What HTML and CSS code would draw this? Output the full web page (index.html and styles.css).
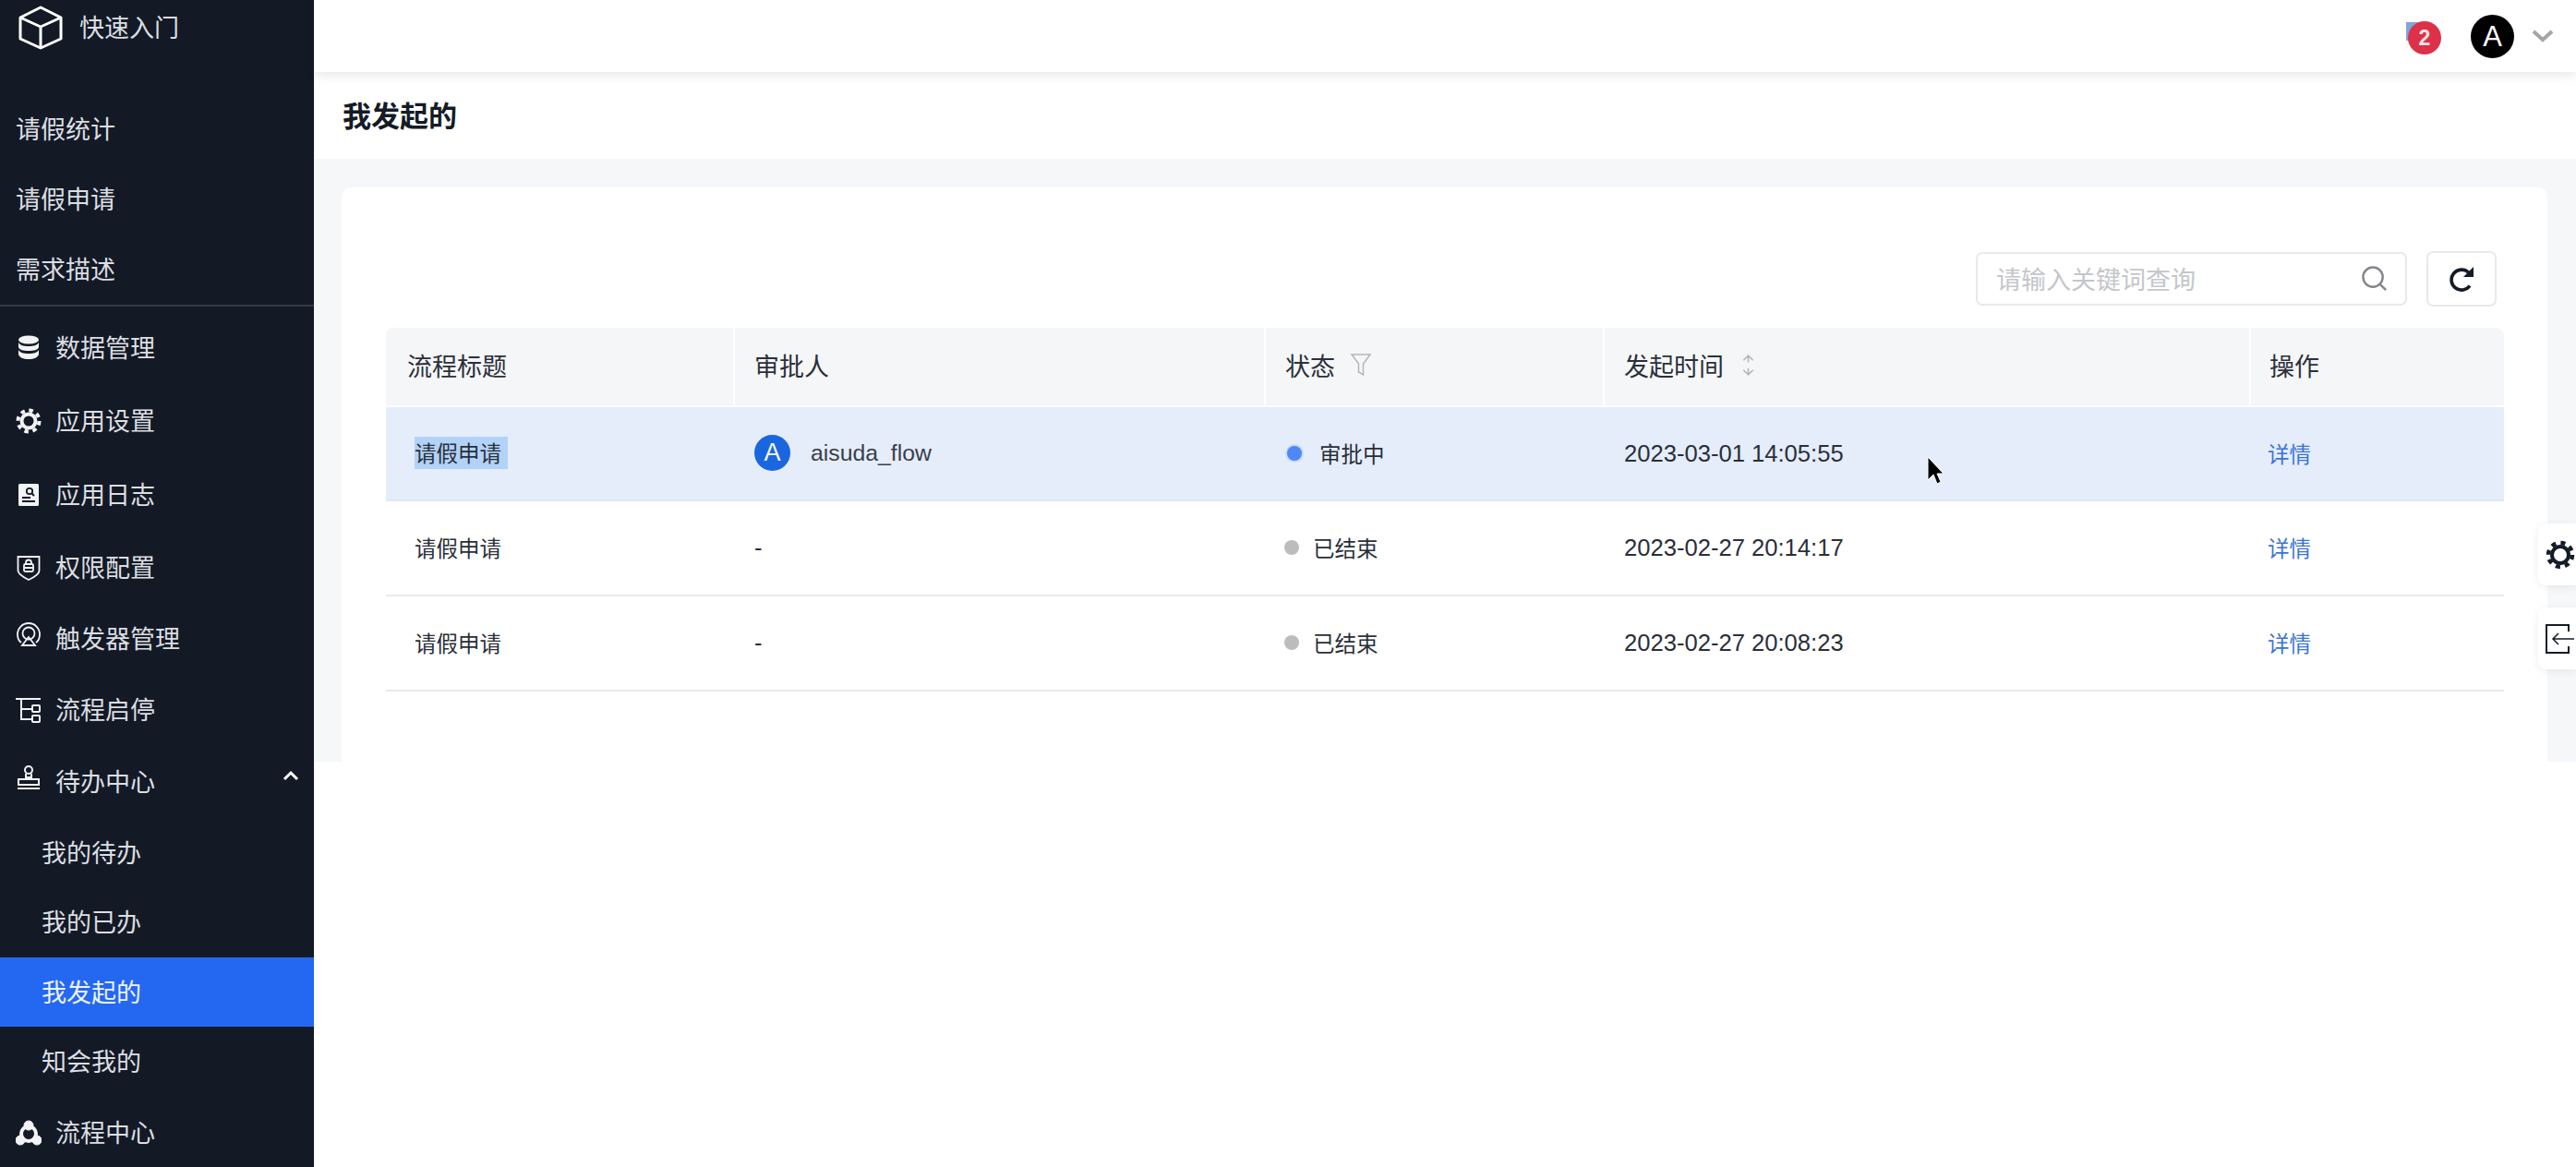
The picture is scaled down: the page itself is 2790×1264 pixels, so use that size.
FILE: index.html
```html
<!DOCTYPE html>
<html lang="zh-CN">
<head>
  <meta charset="UTF-8" />
  <title>我发起的</title>
  <link rel="stylesheet" href="styles.css">
</head>
<body>
  <aside class="sidebar">
    <div class="logo">
      <svg class="logo-icon" viewBox="0 0 48 48" fill="none" stroke="currentColor" stroke-width="3" stroke-linejoin="round">
        <path d="M24 2 46 13V36L24 46 2 36V13Z" />
        <path d="M2 13 24 23 46 13M24 23V46" />
      </svg>
      <span>快速入门</span>
    </div>
    <a class="plain">请假统计</a>
    <a class="plain">请假申请</a>
    <a class="plain">需求描述</a>
    <div class="divider"></div>

    <a class="item tall">
      <svg class="icon" viewBox="0 0 28 28" fill="currentColor">
        <ellipse cx="14" cy="5" rx="11" ry="4.5" />
        <path d="M3 8c2 3 5 4 11 4s9-1 11-4v5c-1 3-5 4-11 4S4 16 3 13Z" />
        <path d="M3 16c2 3 5 4 11 4s9-1 11-4v5c-1 3-5 5-11 5S4 24 3 21Z" />
      </svg>
      <span>数据管理</span>
    </a>
    <a class="item tall">
      <svg class="icon" viewBox="0 0 28 28" fill="none" stroke="currentColor">
        <circle cx="14" cy="14" r="7.5" stroke-width="4" />
        <circle cx="14" cy="14" r="11.5" stroke-width="4" stroke-dasharray="4.5 4.53" />
      </svg>
      <span>应用设置</span>
    </a>
    <a class="item tall">
      <svg class="icon" viewBox="0 0 28 28">
        <rect x="3" y="2" width="22" height="24" rx="1.5" fill="currentColor" />
        <circle cx="15" cy="10" r="3.2" fill="none" stroke="#131a26" stroke-width="1.8" />
        <path d="M17.5 12.5 20 15M7 17h9M7 21h14" fill="none" stroke="#131a26" stroke-width="2" />
      </svg>
      <span>应用日志</span>
    </a>
    <a class="item">
      <svg class="icon" viewBox="0 0 28 28" fill="none" stroke="currentColor" stroke-width="1.8">
        <path d="M2.5 2h23v15c0 4-5 7-11.500 10C8 24 2.500 21 2.500 17Z" />
        <rect x="9" y="10" width="10" height="8" rx="1.5" />
        <path d="M11 10V8.500a3 3 0 0 1 6 0V10M9 14h10" />
      </svg>
      <span>权限配置</span>
    </a>
    <a class="item short">
      <svg class="icon up" viewBox="0 0 28 28" fill="none" stroke="currentColor" stroke-width="1.800">
        <path d="M6 23C3 21 2 17 2 14a12 12 0 0 1 24 0c0 3-1 7-4 9" />
        <circle cx="14" cy="13" r="6.500" />
        <path d="M14 17 21 26H7Z" />
      </svg>
      <span>触发器管理</span>
    </a>
    <a class="item">
      <svg class="icon wide" viewBox="0 0 28 28" fill="none" stroke="currentColor" stroke-width="2">
        <path d="M0 2h27M6 2v22h11M6 13h11" />
        <rect x="18" y="9" width="8" height="7" rx="1" />
        <rect x="18" y="20" width="8" height="7" rx="1" />
      </svg>
      <span>流程启停</span>
    </a>
    <a class="item">
      <svg class="icon up" viewBox="0 0 28 28" fill="none" stroke="currentColor" stroke-width="2">
        <circle cx="14" cy="6" r="4" />
        <path d="M11 10v4h6v-4" />
        <path d="M3 16h22v6H3ZM2 26h24" />
      </svg>
      <span>待办中心</span>
      <svg class="caret" viewBox="0 0 20 12" fill="none" stroke="currentColor" stroke-width="3">
        <path d="M3 10 10 3l7 7" />
      </svg>
    </a>
    <a class="sub">我的待办</a>
    <a class="sub">我的已办</a>
    <a class="sub active">我发起的</a>
    <a class="sub">知会我的</a>
    <a class="item">
      <svg class="icon wide" viewBox="0 0 28 28" fill="none" stroke="currentColor">
        <circle cx="14" cy="15" r="8" stroke-width="4" />
        <circle cx="14" cy="6" r="5" fill="currentColor" />
        <circle cx="5" cy="22" r="5" fill="currentColor" />
        <circle cx="23" cy="22" r="5" fill="currentColor" />
      </svg>
      <span>流程中心</span>
    </a>
  </aside>

  <main class="main">
    <header class="topbar">
      <div class="notice">
        <span class="flag"></span>
        <span class="badge">2</span>
      </div>
      <span class="user">A</span>
      <svg class="user-caret" viewBox="0 0 24 14" fill="none" stroke="currentColor" stroke-width="4">
        <path d="M2 2 12 11 22 2" />
      </svg>
    </header>

    <div class="title-bar">我发起的</div>

    <div class="content">
      <section class="card">
        <div class="toolbar">
          <div class="search">
            <span>请输入关键词查询</span>
            <svg viewBox="0 0 30 30" fill="none" stroke="currentColor" stroke-width="2.500">
              <circle cx="13.500" cy="13.500" r="11" />
              <path d="M21.500 21.500 28 28" />
            </svg>
          </div>
          <div class="refresh">
            <svg viewBox="0 0 28 28" fill="none" stroke="currentColor" stroke-width="3.600">
              <path d="M21.500 7A11 11 0 1 0 23 21.500" />
              <path d="M27 1v11H16Z" fill="currentColor" stroke="none" />
            </svg>
          </div>
        </div>

        <table class="flows">
          <colgroup>
            <col class="col-title">
            <col class="col-user">
            <col class="col-status">
            <col class="col-time">
            <col>
          </colgroup>
          <thead>
            <tr>
              <th>流程标题</th>
              <th>审批人</th>
              <th>
                <span class="th-inner">状态
                  <svg class="filter" viewBox="0 0 22 24" fill="none" stroke="currentColor" stroke-width="1.500">
                    <path d="M1 1h20l-7.500 10v12l-5-3v-9Z" />
                  </svg>
                </span>
              </th>
              <th>
                <span class="th-inner">发起时间
                  <svg class="sort" viewBox="0 0 18 24" fill="none" stroke="currentColor" stroke-width="1.500">
                    <path d="M4 7 9 2l5 5M9 2v7M4 17l5 5 5-5M9 22v-7" />
                  </svg>
                </span>
              </th>
              <th>操作</th>
            </tr>
          </thead>
          <tbody>
            <tr class="hover">
              <td class="name"><span class="picked">请假申请</span></td>
              <td>
                <span class="approver"><span class="avatar">A</span><span class="login">aisuda_flow</span></span>
              </td>
              <td><span class="status"><i class="dot running"></i>审批中</span></td>
              <td class="latin">2023-03-01 14:05:55</td>
              <td class="ops"><a class="link">详情</a></td>
            </tr>
            <tr>
              <td class="name">请假申请</td>
              <td class="latin">-</td>
              <td><span class="status done"><i class="dot"></i>已结束</span></td>
              <td class="latin">2023-02-27 20:14:17</td>
              <td class="ops"><a class="link">详情</a></td>
            </tr>
            <tr>
              <td class="name">请假申请</td>
              <td class="latin">-</td>
              <td><span class="status done"><i class="dot"></i>已结束</span></td>
              <td class="latin">2023-02-27 20:08:23</td>
              <td class="ops"><a class="link">详情</a></td>
            </tr>
          </tbody>
        </table>
      </section>
    </div>
  </main>

  <div class="float-tab tab-settings">
    <svg viewBox="0 0 32 32" fill="none" stroke="currentColor">
      <circle cx="16" cy="16" r="9" stroke-width="4" />
      <circle cx="16" cy="16" r="13" stroke-width="4.500" stroke-dasharray="5 5.210" />
    </svg>
  </div>
  <div class="float-tab tab-exit">
    <svg viewBox="0 0 32 32" fill="none" stroke="currentColor" stroke-width="2">
      <path d="M25 8V1H1v30h24v-7" />
      <path d="M31 16H8M14 10l-6 6 6 6" stroke-width="1.500" />
    </svg>
  </div>

  <svg class="cursor" viewBox="0 0 20 32">
    <path d="M2 1v25l6-6 4 10 4-2-4-9h7Z" fill="#000" stroke="#fff" stroke-width="1" />
  </svg>
</body>
</html>
```

FILE: styles.css
```css
* {
  box-sizing: border-box;
}
html, body {
  margin: 0;
  height: 1264px;
  overflow: hidden;
}
body {
  display: flex;
  background: #fff;
  color: #151b26;
  font-family: "Noto Sans CJK SC", "Liberation Sans", sans-serif;
}

/* sidebar */
.sidebar {
  width: 340px;
  flex: none;
  background: #131a26;
  color: #dcdee2;
  font-size: 27px;
}
.sidebar a {
  display: flex;
  align-items: center;
}
.logo {
  height: 102px;
  padding: 0 0 42px 20px;
  display: flex;
  align-items: center;
  gap: 18px;
}
.logo span {
  padding-bottom: 3px;
}
.logo-icon {
  width: 48px;
  height: 48px;
  color: #fff;
}
.plain {
  height: 76px;
  padding-left: 17px;
  padding-bottom: 3px;
}
.divider {
  height: 2px;
  margin-bottom: 5px;
  background: #343a45;
}
.item {
  height: 78px;
  padding-left: 17px;
  gap: 15px;
  position: relative;
}
.item span {
  padding-bottom: 3px;
}
.item.tall {
  height: 79.67px;
}
.item.short {
  height: 76px;
}
.icon {
  width: 28px;
  height: 28px;
  flex: none;
  color: #f2f3f5;
}
.icon.up {
  margin-bottom: 10px;
}
.caret {
  width: 20px;
  height: 12px;
  position: absolute;
  right: 15px;
  top: 26px;
  color: #fff;
}
.sub {
  height: 75.5px;
  padding-left: 45px;
  padding-bottom: 3px;
}
.sub.active {
  background: #2468f2;
  color: #eef3fe;
}

/* header */
.main {
  flex: 1;
  min-width: 0;
}
.topbar {
  height: 78px;
  display: flex;
  align-items: center;
  justify-content: flex-end;
  padding-right: 24px;
  background: #fff;
  box-shadow: 0 3px 12px rgba(0, 0, 0, .1);
  position: relative;
}
.notice {
  width: 36px;
  height: 36px;
  margin-right: 32px;
  margin-top: 3px;
  position: relative;
}
.flag {
  position: absolute;
  left: -2px;
  top: 1px;
  width: 16px;
  height: 20px;
  background: #7fa4dc;
}
.badge {
  position: absolute;
  inset: 0;
  border-radius: 50%;
  background: #dc3148;
  color: #fbe4e7;
  font: bold 23px/36px "Liberation Sans", sans-serif;
  text-align: center;
}
.user {
  width: 47px;
  height: 47px;
  border-radius: 50%;
  background: #000;
  color: #fff;
  font: 31px/47px "Liberation Sans", sans-serif;
  text-align: center;
}
.user-caret {
  width: 24px;
  height: 14px;
  margin-left: 19px;
  color: #a5a5a5;
}
.title-bar {
  height: 94px;
  padding-left: 31px;
  padding-bottom: 3px;
  display: flex;
  align-items: center;
  font-size: 31px;
  font-weight: 700;
}
.content {
  height: 653px;
  padding: 31px 31px 0 30px;
  background: #f6f7f9;
}
.card {
  height: 622px;
  padding: 69px 47px 0 48px;
  background: #fff;
  border-radius: 10px 10px 0 0;
}

/* toolbar */
.toolbar {
  display: flex;
  justify-content: flex-end;
  align-items: center;
  gap: 21px;
  height: 60px;
  margin-bottom: 23px;
  padding-right: 8px;
}
.search {
  width: 467px;
  height: 58px;
  padding: 0 19px 2px 20px;
  display: flex;
  align-items: center;
  justify-content: space-between;
  border: 2px solid #e8e9eb;
  border-radius: 7px;
  color: #c4c6cb;
  font-size: 27px;
}
.search svg {
  width: 29px;
  height: 29px;
  color: #84868c;
}
.refresh {
  width: 76px;
  height: 60px;
  display: flex;
  align-items: center;
  justify-content: center;
  border: 2px solid #e8e9eb;
  border-radius: 7px;
  color: #151b26;
}
.refresh svg {
  width: 28px;
  height: 28px;
}

/* table */
.flows {
  width: 100%;
  table-layout: fixed;
  border-collapse: separate;
  border-spacing: 0;
}
.col-title { width: 378px; }
.col-user { width: 575px; }
.col-status { width: 367px; }
.col-time { width: 700px; }
.flows th {
  height: 86px;
  padding: 0 20px 4px 21px;
  background: #f5f6f8;
  border-right: 2px solid #fff;
  border-bottom: 2px solid #fff;
  font-size: 27px;
  font-weight: 400;
  text-align: left;
  color: #2b303a;
}
.flows th:first-child {
  padding-left: 23px;
  border-top-left-radius: 8px;
}
.flows th:last-child {
  padding-left: 20px;
  border-right: none;
  border-top-right-radius: 8px;
}
.th-inner {
  display: flex;
  align-items: center;
}
.filter {
  width: 22px;
  height: 24px;
  margin-left: 17px;
  color: #b4b6ba;
}
.sort {
  width: 19px;
  height: 25px;
  margin-left: 17px;
  color: #b4b6ba;
}
.flows td {
  height: 103px;
  padding: 0 21px 1px;
  border-bottom: 2px solid #e8e9eb;
  font-size: 23.500px;
  color: #2a2f39;
}
.flows tr.hover td {
  height: 102px;
  background: #e5edfb;
  border-bottom-color: #e1e8f6;
}
.flows td.name {
  padding-left: 31px;
}
.flows td.ops {
  padding-left: 18px;
}
.picked {
  display: inline-block;
  height: 35px;
  padding-right: 7px;
  line-height: 34px;
  background: #b2d2f8;
}
.flows td.latin {
  font-family: "Liberation Sans", "Noto Sans CJK SC", sans-serif;
  font-size: 25.600px;
  padding-bottom: 0;
}
.login {
  font-family: "Liberation Sans", sans-serif;
  font-size: 24.800px;
  color: #3a3f49;
}
.approver {
  display: flex;
  align-items: center;
  gap: 22px;
}
.avatar {
  width: 39px;
  height: 39px;
  border-radius: 50%;
  background: #1a66df;
  color: #f4f7fd;
  font: 27px/39px "Liberation Sans", sans-serif;
  text-align: center;
}
.status {
  display: flex;
  align-items: center;
  gap: 19px;
  padding-left: 2px;
}
.status.done {
  padding-left: 0;
  gap: 15px;
}
.dot {
  width: 16px;
  height: 16px;
  margin-left: -1px;
  border-radius: 50%;
  background: #bcbcbc;
}
.dot.running {
  margin-left: 0;
  background: #4f87f3;
  box-shadow: 0 0 0 2px #c9dafa;
}
.link {
  color: #3a74d4;
}

/* things lying over the page */
.float-tab {
  position: absolute;
  right: 0;
  width: 41px;
  height: 67px;
  padding-left: 8px;
  display: flex;
  align-items: center;
  background: #fff;
  border-radius: 8px 0 0 8px;
  box-shadow: 0 2px 10px rgba(0, 0, 0, .07);
  color: #151b26;
}
.float-tab svg {
  width: 32px;
  height: 32px;
  flex: none;
}
.tab-settings {
  top: 567px;
}
.tab-exit {
  top: 658px;
}
.cursor {
  position: absolute;
  left: 2086px;
  top: 494px;
  width: 20px;
  height: 32px;
}
```
